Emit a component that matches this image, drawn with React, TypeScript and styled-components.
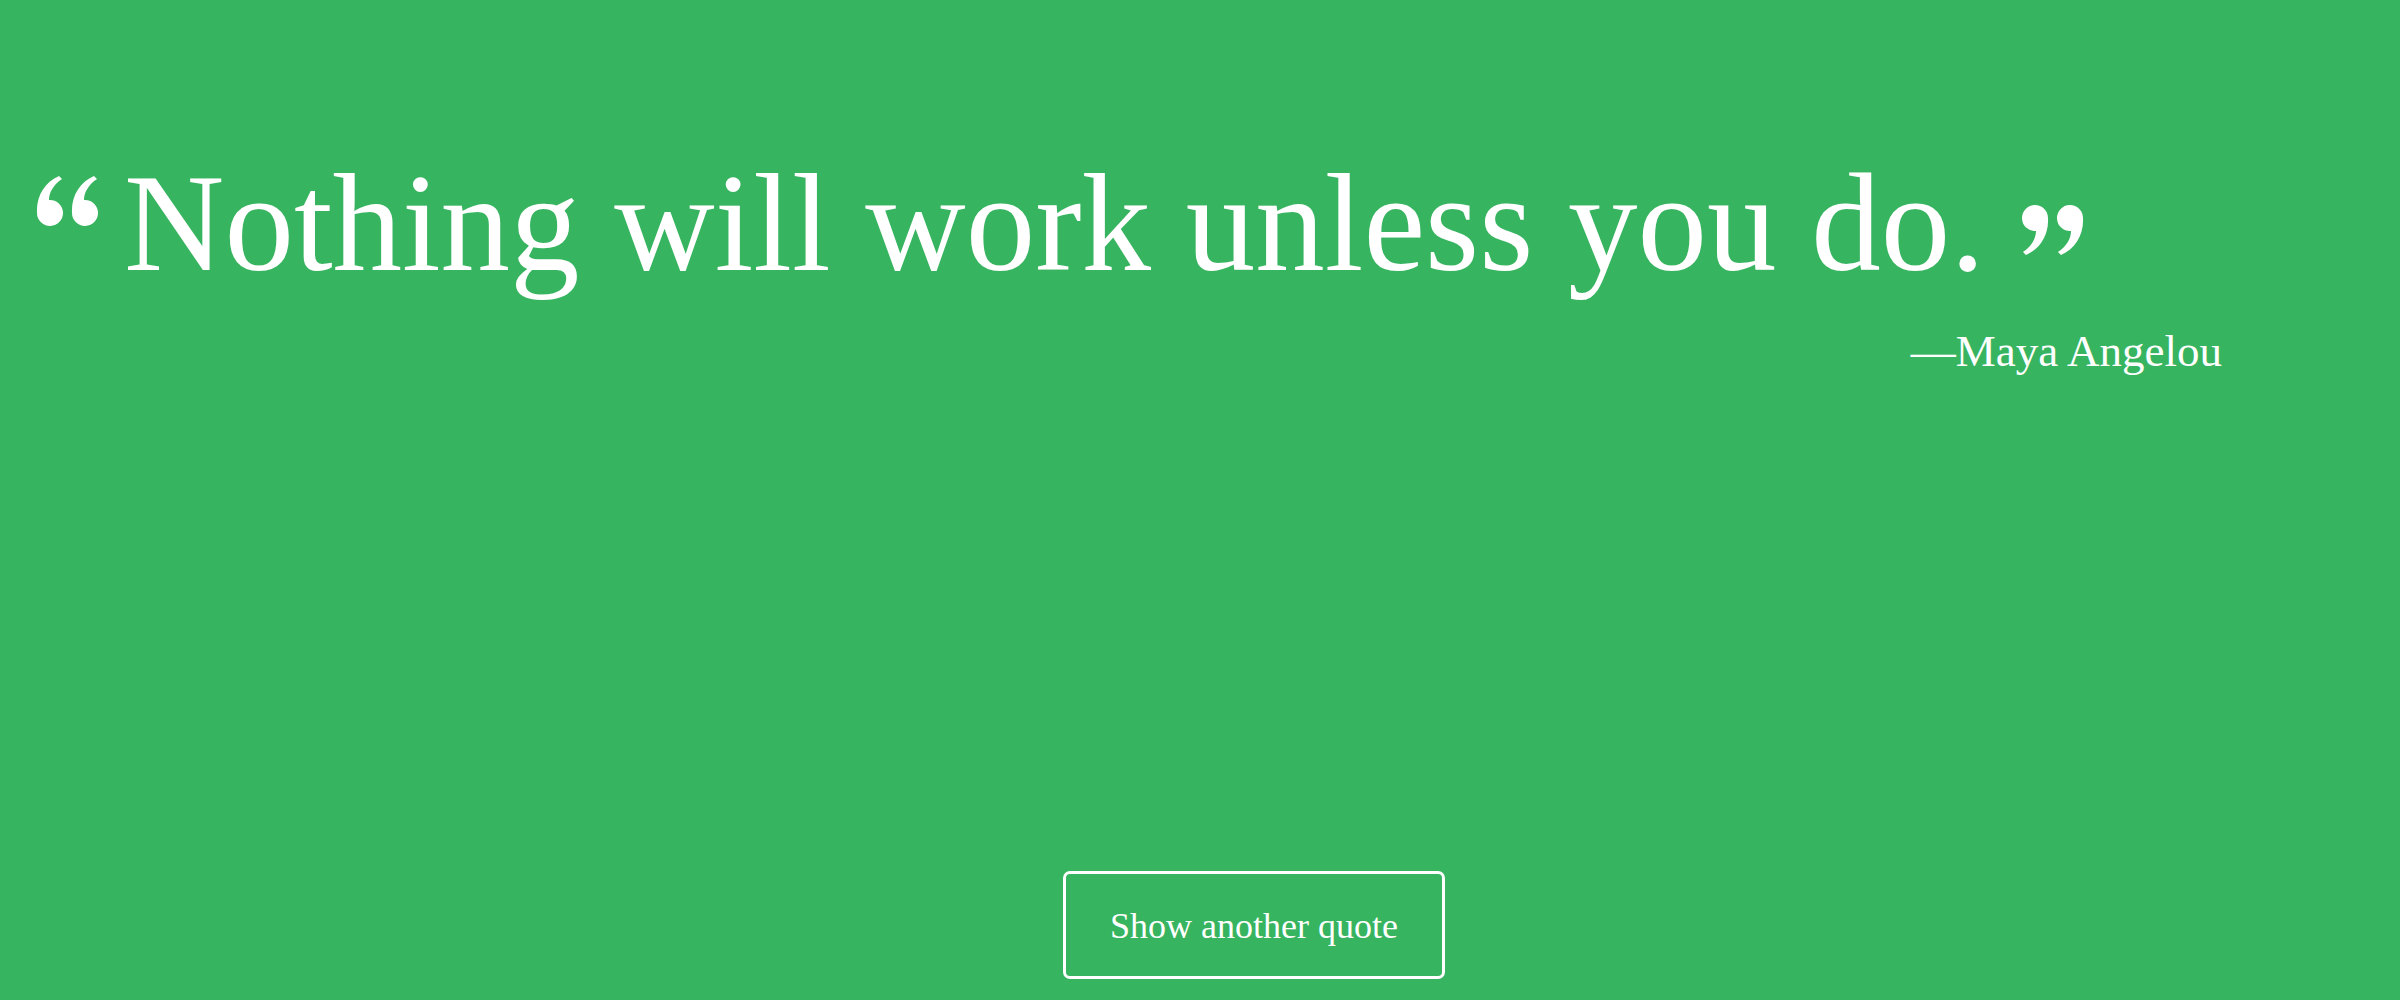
import React from "react";
import styled, { createGlobalStyle } from "styled-components";

const GlobalStyle = createGlobalStyle`
  html, body {
    margin: 0;
    padding: 0;
    background: #37b45f;
  }
  * { box-sizing: border-box; }
`;

const Page = styled.main`
  min-height: 100vh;
  display: flex;
  flex-direction: column;
  background: #37b45f;
  color: #ffffff;
  font-family: "Liberation Serif", "Times New Roman", serif;
  padding: 154px 0 21px 0;
`;

const QuoteRow = styled.div`
  display: flex;
  align-items: flex-start;
  padding-left: 36px;
`;

const Mark = styled.svg<{ $drop: number; $gapLeft: number; $gapRight: number }>`
  flex: none;
  width: 62px;
  height: 50px;
  margin-top: ${(p) => p.$drop}px;
  margin-left: ${(p) => p.$gapLeft}px;
  margin-right: ${(p) => p.$gapRight}px;
  fill: #ffffff;
`;

const QuoteText = styled.h1`
  margin: 0;
  font-family: "Liberation Serif", "Times New Roman", serif;
  font-weight: 400;
  font-size: 139px;
  line-height: 139px;
  white-space: nowrap;
`;

const Author = styled.p`
  margin: 36px 0 0 0;
  padding-right: 178px;
  text-align: right;
  font-size: 45px;
  line-height: 45px;
`;

const Footer = styled.footer`
  margin-top: auto;
  display: flex;
  justify-content: center;
  padding-left: 108px;
`;

const Button = styled.button`
  font-family: "Liberation Serif", "Times New Roman", serif;
  font-size: 36px;
  line-height: 36px;
  color: #ffffff;
  background: transparent;
  border: 3px solid #ffffff;
  border-radius: 7px;
  padding: 34px 44px 32px;
  cursor: pointer;
`;

const sixPath =
  "M1 37 C0 20 9 6 23 0 L26 3 C17 9 13 17 13 24 A13 13 0 1 1 1 37 Z";

const QuoteMark: React.FC<{ flip?: boolean; drop: number; gapLeft: number; gapRight: number }> = ({
  flip,
  drop,
  gapLeft,
  gapRight,
}) => (
  <Mark viewBox="0 0 62 50" $drop={drop} $gapLeft={gapLeft} $gapRight={gapRight} aria-hidden="true">
    <g transform={flip ? "rotate(180 31 25)" : undefined}>
      <path d={sixPath} />
      <path d={sixPath} transform="translate(35 0)" />
    </g>
  </Mark>
);

export default function App() {
  return (
    <>
      <GlobalStyle />
      <Page>
        <QuoteRow>
          <QuoteMark drop={22} gapLeft={0} gapRight={26} />
          <QuoteText>Nothing will work unless you do.</QuoteText>
          <QuoteMark flip drop={51} gapLeft={37} gapRight={0} />
        </QuoteRow>
        <Author>—Maya Angelou</Author>
        <Footer>
          <Button type="button">Show another quote</Button>
        </Footer>
      </Page>
    </>
  );
}
